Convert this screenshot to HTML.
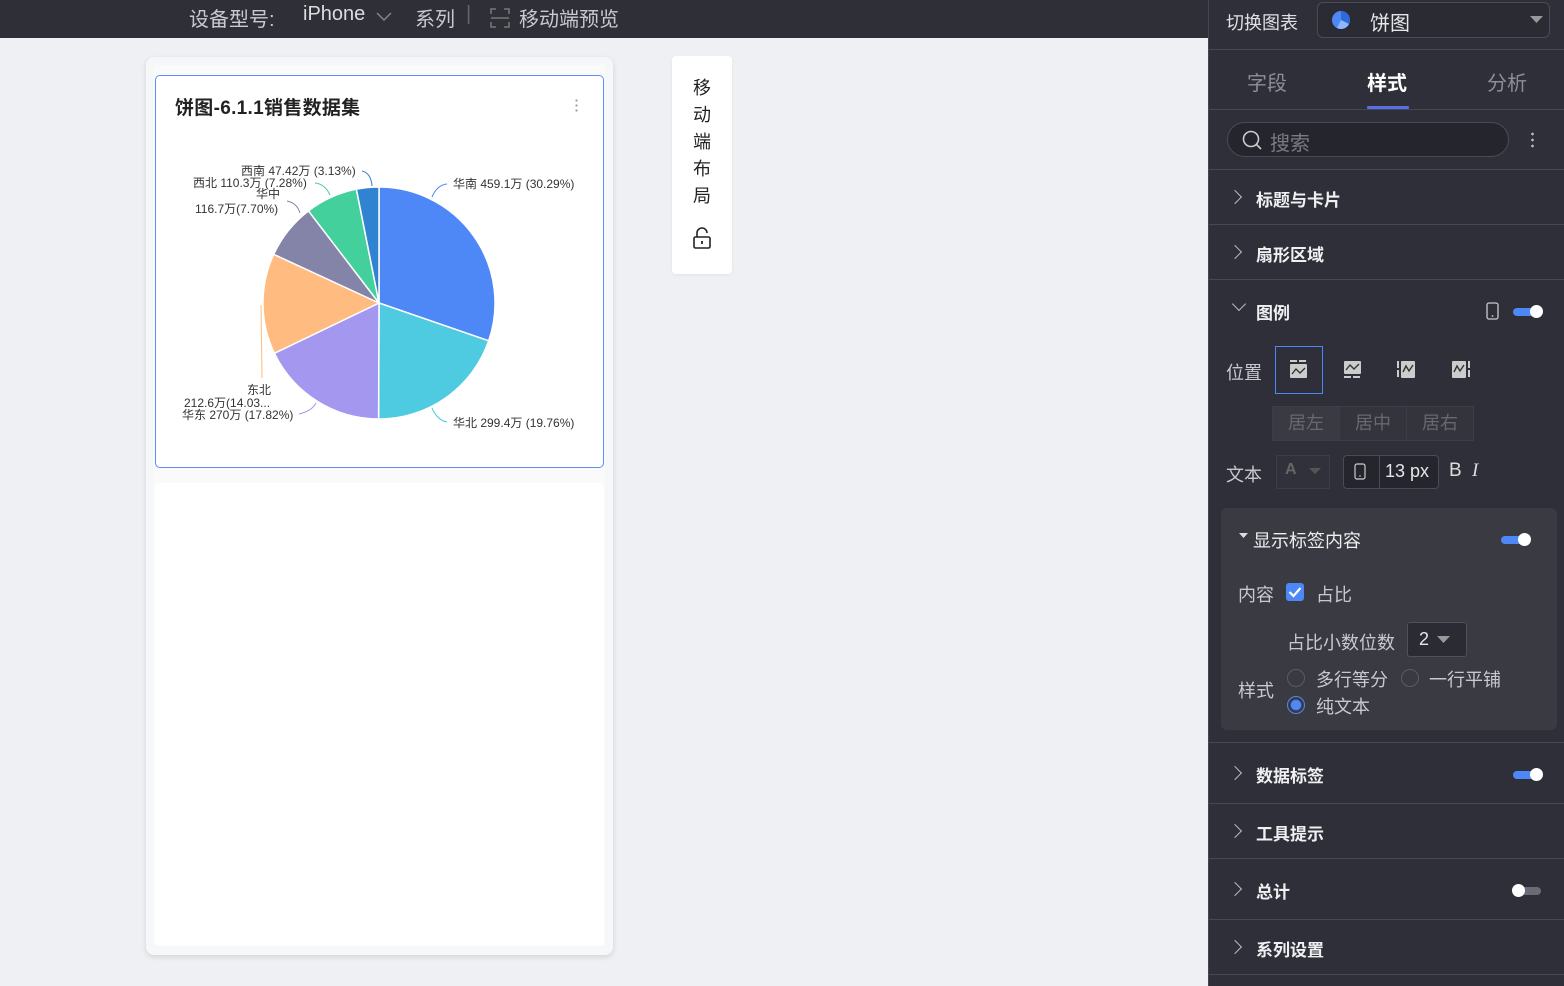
<!DOCTYPE html>
<html><head><meta charset="utf-8"><style>
*{margin:0;padding:0;box-sizing:border-box}
body{width:1564px;height:984px;overflow:hidden;background:#eef0f3;font-family:"Liberation Sans","Noto Sans CJK SC",sans-serif;position:relative}
.abs{position:absolute}
.top{left:0;top:0;width:1208px;height:38px;background:#2e2f37;color:#c9cacf;font-size:20px}
.top span{position:absolute;top:3px}
.panel{left:1208px;top:-2px;width:356px;height:988px;background:#2e2f38;color:#e6e6ea;border-left:1px solid #45464f}
.hr{position:absolute;left:0;width:356px;height:1px;background:#474852}
.sec{position:absolute;left:47px;font-size:17px;font-weight:bold;color:#f0f0f3}
.chev{position:absolute;left:24px;width:10px;height:10px;border-right:1.6px solid #bbb;border-top:1.6px solid #bbb;transform:rotate(45deg)}
.tog{position:absolute;width:28px;height:8px;border-radius:4px;background:#4e88f7}
.tog::after{content:"";position:absolute;right:-2px;top:-3px;width:13px;height:13px;border-radius:50%;background:#fff}
.lbl{position:absolute;font-size:18px;color:#c8c9ce}
</style></head><body>
<div class="abs top">
<span style="left:189px">设备型号:</span>
<span style="left:303px;color:#dcdde1">iPhone</span>
<svg class="abs" style="left:376px;top:11px" width="16" height="12"><path d="M1 2 L8 9 L15 2" stroke="#888" fill="none" stroke-width="1.4"/></svg>
<span style="left:415px">系列</span>
<span style="left:466px;color:#666;top:3px">|</span>
<svg class="abs" style="left:490px;top:8px" width="20" height="20"><path d="M1 6V1h5M14 1h5v5M19 14v5h-5M6 19H1v-5M1 10h18" stroke="#777" fill="none" stroke-width="1.6"/></svg>
<span style="left:519px">移动端预览</span>
</div>

<div class="abs" style="left:146px;top:57px;width:467px;height:898px;background:#f6f7f9;border-radius:8px;box-shadow:0 2px 6px rgba(0,0,0,.12)"></div>
<div class="abs" style="left:153px;top:65px;width:452px;height:880px;background:#fafafa"></div>
<div class="abs" style="left:155px;top:75px;width:449px;height:393px;background:#fff;border:1.5px solid #5b8ff5;border-radius:5px"></div>
<div class="abs" style="left:155px;top:483px;width:449px;height:463px;background:#fff;border-radius:5px"></div>
<div class="abs" style="left:175px;top:93px;font-size:19px;font-weight:bold;color:#222;letter-spacing:0.3px">饼图-6.1.1销售数据集</div>
<div class="abs" style="left:575px;top:98px;width:3px;height:14px;background:radial-gradient(circle,#999 1px,transparent 1.2px) 0 0/3px 5px"></div>
<svg class="abs" style="left:0;top:0" width="620" height="480" font-family="Liberation Sans,Noto Sans CJK SC,sans-serif" font-size="12" fill="#333">
<g stroke="#fff" stroke-width="1.5">
<path d="M379 303 L379 187 A116 116 0 0 1 488.7 340.8Z" fill="#4e88f7"/>
<path d="M379 303 L488.7 340.8 A116 116 0 0 1 378.6 419Z" fill="#4ecbe0"/>
<path d="M379 303 L378.6 419 A116 116 0 0 1 274.4 353.3Z" fill="#a497ef"/>
<path d="M379 303 L274.4 353.3 A116 116 0 0 1 273.7 254.3Z" fill="#ffbb80"/>
<path d="M379 303 L273.7 254.3 A116 116 0 0 1 308.5 210.9Z" fill="#8484a8"/>
<path d="M379 303 L308.5 210.9 A116 116 0 0 1 356.4 189.2Z" fill="#43d09d"/>
<path d="M379 303 L356.4 189.2 A116 116 0 0 1 379 187Z" fill="#3083d0"/>
</g>
<g fill="none" stroke-width="1">
<path d="M432 197 Q437 185 447 184" stroke="#4e88f7"/>
<path d="M432 408 Q437 420 447 422" stroke="#4ecbe0"/>
<path d="M299 414 Q312 411 316 403" stroke="#a497ef"/>
<path d="M261 305 L262 378" stroke="#ffbb80"/>
<path d="M300 213 Q297 203 287 201" stroke="#8484a8"/>
<path d="M330 195 Q325 184 315 183" stroke="#43d09d"/>
<path d="M372 186 Q371 173 362 171" stroke="#3083d0"/>
</g>
<text x="453" y="188">华南 459.1万 (30.29%)</text>
<text x="453" y="427">华北 299.4万 (19.76%)</text>
<text x="241" y="175">西南 47.42万 (3.13%)</text>
<text x="193" y="187">西北 110.3万 (7.28%)</text>
<text x="256" y="198">华中</text>
<text x="195" y="213">116.7万(7.70%)</text>
<text x="247" y="394">东北</text>
<text x="184" y="407">212.6万(14.03...</text>
<text x="182" y="419">华东 270万 (17.82%)</text>
</svg>

<div class="abs" style="left:672px;top:56px;width:60px;height:218px;background:#fff;border-radius:4px;box-shadow:0 1px 3px rgba(0,0,0,.06)"></div>
<div class="abs" style="left:692px;top:75px;width:20px;font-size:18px;line-height:27px;color:#222;text-align:center">移动端布局</div>
<svg class="abs" style="left:692px;top:227px" width="20" height="24"><path d="M5 10V6a5 5 0 0 1 10 0" stroke="#222" fill="none" stroke-width="1.6"/><rect x="2" y="10" width="16" height="11" rx="1.5" stroke="#222" fill="none" stroke-width="1.6"/><path d="M10 14v3" stroke="#222" stroke-width="1.8"/></svg>

<div class="abs panel">
<div class="lbl" style="left:17px;top:11px;color:#e0e0e4">切换图表</div>
<div class="abs" style="left:108px;top:4px;width:233px;height:36px;border:1px solid #4a4b55;border-radius:6px;background:#2a2b33"></div>
<svg class="abs" style="left:122px;top:12px" width="20" height="20"><circle cx="10" cy="10" r="9" fill="#4e88f7"/><path d="M10 10 L10 1 A9 9 0 0 1 18 14Z" fill="#2f6ad8"/><path d="M10 10 L18 14 A9 9 0 0 1 6 18Z" fill="#8fb6ff"/></svg>
<div class="lbl" style="left:161px;top:9px;font-size:20px;color:#e6e6ea">饼图</div>
<svg class="abs" style="left:321px;top:18px" width="14" height="9"><path d="M0 0h13L6.5 7Z" fill="#999"/></svg>
<div class="hr" style="top:51px"></div>
<div class="lbl" style="left:38px;top:69px;font-size:20px;color:#8e8f96">字段</div>
<div class="lbl" style="left:158px;top:69px;font-size:20px;color:#fff;font-weight:bold">样式</div>
<div class="lbl" style="left:278px;top:69px;font-size:20px;color:#8e8f96">分析</div>
<div class="abs" style="left:158px;top:108px;width:42px;height:3px;background:#5a6ee8;border-radius:1px"></div>
<div class="hr" style="top:111px"></div>
<div class="abs" style="left:18px;top:124px;width:282px;height:35px;border:1px solid #4a4b55;border-radius:18px;background:#25262d"></div>
<svg class="abs" style="left:33px;top:132px" width="22" height="22"><circle cx="9" cy="9" r="7.5" stroke="#ccc" fill="none" stroke-width="1.6"/><path d="M14.5 14.5L19 19" stroke="#ccc" stroke-width="1.6"/></svg>
<div class="lbl" style="left:61px;top:129px;font-size:20px;color:#7a7b82">搜索</div>
<div class="abs" style="left:322px;top:133px;width:3px;height:17px;background:radial-gradient(circle,#bbb 1.2px,transparent 1.5px) 0 0/3px 6px"></div>
<div class="hr" style="top:171px"></div>
<div class="chev" style="top:194px;left:21px"></div><div class="sec" style="top:188px">标题与卡片</div>
<div class="hr" style="top:226px"></div>
<div class="chev" style="top:249px;left:21px"></div><div class="sec" style="top:243px">扇形区域</div>
<div class="hr" style="top:281px"></div>
<div class="chev" style="top:301px;left:25px;transform:rotate(135deg)"></div><div class="sec" style="top:301px">图例</div>
<svg class="abs" style="left:277px;top:304px" width="13" height="18"><rect x="1" y="1" width="11" height="16" rx="2" stroke="#ccc" fill="none" stroke-width="1.3"/><circle cx="6.5" cy="14" r=".9" fill="#ccc"/></svg>
<div class="tog" style="left:304px;top:310px"></div>
<div class="lbl" style="left:17px;top:361px">位置</div>
<div class="abs" style="left:66px;top:348px;width:48px;height:48px;border:1.5px solid #4e88f7"></div>
<svg class="abs" style="left:80px;top:362px" width="20" height="20"><rect x="1" y="0" width="7" height="2" fill="#ccc"/><rect x="10" y="0" width="7" height="2" fill="#ccc"/><rect x="1" y="4" width="17" height="14" rx="1" fill="#ccc"/><path d="M3 14l4-5 4 4 5-5" stroke="#333" fill="none" stroke-width="1.4"/></svg>
<svg class="abs" style="left:134px;top:362px" width="20" height="20"><rect x="1" y="1" width="17" height="13" rx="1" fill="#ccc"/><path d="M3 10l4-5 4 4 5-5" stroke="#333" fill="none" stroke-width="1.4"/><rect x="1" y="16" width="7" height="2" fill="#ccc"/><rect x="10" y="16" width="7" height="2" fill="#ccc"/></svg>
<svg class="abs" style="left:188px;top:362px" width="20" height="20"><rect x="0" y="1" width="2" height="7" fill="#ccc"/><rect x="0" y="10" width="2" height="7" fill="#ccc"/><rect x="4" y="1" width="14" height="17" rx="1" fill="#ccc"/><path d="M6 12l3-6 3 5 4-6" stroke="#333" fill="none" stroke-width="1.4"/></svg>
<svg class="abs" style="left:242px;top:362px" width="20" height="20"><rect x="1" y="1" width="14" height="17" rx="1" fill="#ccc"/><path d="M3 12l3-6 3 5 4-6" stroke="#333" fill="none" stroke-width="1.4"/><rect x="17" y="1" width="2" height="7" fill="#ccc"/><rect x="17" y="10" width="2" height="7" fill="#ccc"/></svg>
<div class="abs" style="left:63px;top:408px;width:202px;height:35px;border:1px solid #3c3d46;background:#33343c;display:flex">
<div style="flex:1;text-align:center;line-height:33px;color:#676870;font-size:18px;background:#393a42;border-right:1px solid #3c3d46">居左</div>
<div style="flex:1;text-align:center;line-height:33px;color:#676870;font-size:18px;border-right:1px solid #3c3d46">居中</div>
<div style="flex:1;text-align:center;line-height:33px;color:#676870;font-size:18px">居右</div></div>
<div class="lbl" style="left:17px;top:463px">文本</div>
<div class="abs" style="left:67px;top:457px;width:54px;height:34px;border:1px solid #3c3d46;background:#30313a"></div>
<div class="abs" style="left:76px;top:463px;color:#666;font-size:16px;font-weight:bold">A</div>
<svg class="abs" style="left:100px;top:470px" width="12" height="8"><path d="M0 0h12L6 6Z" fill="#555"/></svg>
<div class="abs" style="left:134px;top:457px;width:96px;height:34px;border:1px solid #4a4b55;border-radius:4px;background:#25262d"></div>
<div class="abs" style="left:170px;top:458px;width:1px;height:32px;background:#4a4b55"></div>
<svg class="abs" style="left:145px;top:465px" width="12" height="18"><rect x="1" y="1" width="10" height="15" rx="2" stroke="#ccc" fill="none" stroke-width="1.2"/><circle cx="6" cy="13" r=".8" fill="#ccc"/></svg>
<div class="lbl" style="left:176px;top:463px;color:#e6e6ea">13 px</div>
<div class="lbl" style="left:240px;top:462px;color:#ddd;font-size:19px">B</div>
<div class="lbl" style="left:263px;top:462px;color:#ddd;font-size:19px;font-style:italic;font-family:'Liberation Serif',serif">I</div>

<div class="abs" style="left:12px;top:510px;width:336px;height:222px;background:#393a42;border-radius:6px"></div>
<svg class="abs" style="left:30px;top:535px" width="10" height="6"><path d="M0 0h9L4.5 5Z" fill="#ddd"/></svg>
<div class="lbl" style="left:44px;top:529px;color:#eee">显示标签内容</div>
<div class="tog" style="left:292px;top:538px"></div>
<div class="lbl" style="left:29px;top:583px">内容</div>
<div class="abs" style="left:77px;top:585px;width:18px;height:18px;background:#4e88f7;border-radius:3px"></div>
<svg class="abs" style="left:77px;top:585px" width="18" height="18"><path d="M3.5 9l4 4 7-8" stroke="#fff" fill="none" stroke-width="2.2"/></svg>
<div class="lbl" style="left:107px;top:583px">占比</div>
<div class="lbl" style="left:78px;top:631px">占比小数位数</div>
<div class="abs" style="left:198px;top:624px;width:60px;height:35px;border:1px solid #50515a;border-radius:3px;background:#2a2b33"></div>
<div class="lbl" style="left:210px;top:631px;color:#e6e6ea">2</div>
<svg class="abs" style="left:228px;top:638px" width="13" height="8"><path d="M0 0h13L6.5 7Z" fill="#999"/></svg>
<div class="lbl" style="left:29px;top:679px">样式</div>
<div class="abs" style="left:78px;top:671px;width:18px;height:18px;border:1px solid #5a5b63;border-radius:50%"></div>
<div class="lbl" style="left:107px;top:668px">多行等分</div>
<div class="abs" style="left:192px;top:671px;width:18px;height:18px;border:1px solid #5a5b63;border-radius:50%"></div>
<div class="lbl" style="left:220px;top:668px">一行平铺</div>
<div class="abs" style="left:78px;top:698px;width:18px;height:18px;border:1.5px solid #4e88f7;border-radius:50%;background:radial-gradient(circle,#4e88f7 5px,transparent 5.5px)"></div>
<div class="lbl" style="left:107px;top:695px">纯文本</div>

<div class="hr" style="top:744px"></div>
<div class="chev" style="top:770px;left:21px"></div><div class="sec" style="top:764px">数据标签</div>
<div class="tog" style="left:304px;top:773px"></div>
<div class="hr" style="top:805px"></div>
<div class="chev" style="top:828px;left:21px"></div><div class="sec" style="top:822px">工具提示</div>
<div class="hr" style="top:860px"></div>
<div class="chev" style="top:886px;left:21px"></div><div class="sec" style="top:880px">总计</div>
<div class="abs" style="left:304px;top:889px;width:28px;height:8px;border-radius:4px;background:#6a6b75"></div>
<div class="abs" style="left:303px;top:886px;width:13px;height:13px;border-radius:50%;background:#fff"></div>
<div class="hr" style="top:921px"></div>
<div class="chev" style="top:944px;left:21px"></div><div class="sec" style="top:938px">系列设置</div>
<div class="hr" style="top:976px"></div>
</div>
</body></html>
